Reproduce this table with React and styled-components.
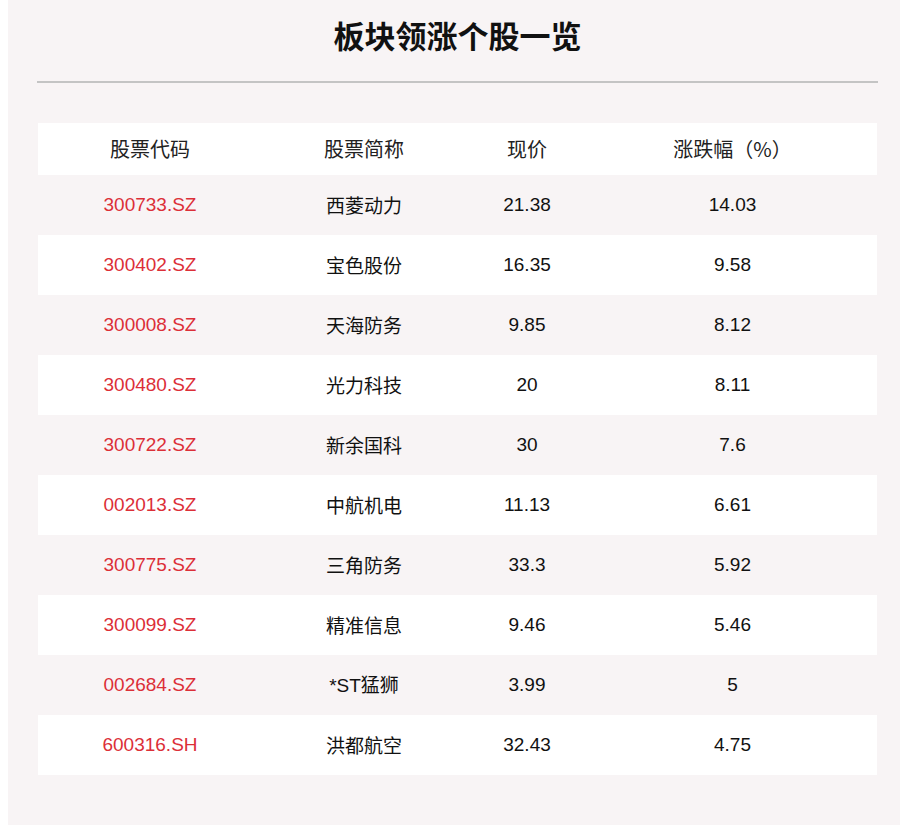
import styled, { createGlobalStyle } from "styled-components";

const GlobalStyle = createGlobalStyle`
  html, body {
    margin:0;
    padding:0;
    background:#ffffff;
  }
  body {
    font-family:"Liberation Sans", Arial, "Noto Sans CJK SC", sans-serif;
  }
`;

const Page = styled.div`
  margin-left:8px;
  height:825px;
  background:#f8f4f5;
  padding:0 23px 0 29px;
  box-sizing:border-box;
  overflow:hidden;
`;

const Title = styled.h1`
  margin:0;
  height:70px;
  line-height:70px;
  text-align:center;
  font-size:31px;
  font-weight:bold;
  color:#111;
  padding-left:1px;
  font-family:"Noto Sans CJK SC", "Liberation Sans", sans-serif;
`;

const Divider = styled.div`
  margin-top:11px;
  height:2px;
  background:#c4c4c4;
  width:841px;
`;

const Table = styled.div`
  margin-top:40px;
  margin-left:1px;
  width:839px;
  display:flex;
  flex-direction:column;
`;

const Row = styled.div`
  display:grid;
  grid-template-columns:224px 204px 122px 289px;
  align-items:center;
  height:${p => (p.$head ? 52 : 60)}px;
  background:${p => (p.$shade ? "#f8f4f5" : "#ffffff")};
`;

const Cell = styled.div`
  text-align:center;
  font-size:${p => (p.$head ? 20 : 19)}px;
  line-height:1.2;
  color:${p => (p.$red ? "#dc2f38" : p.$head ? "#222" : "#111")};
  font-family:${p =>
    p.$cjk
      ? `"Noto Sans CJK SC", "Liberation Sans", sans-serif`
      : `"Liberation Sans", Arial, "Noto Sans CJK SC", sans-serif`};
`;

const Latin = styled.span`
  font-family:"Liberation Sans", Arial, sans-serif;
`;

const rows = [
  ["300733.SZ", "西菱动力", "21.38", "14.03"],
  ["300402.SZ", "宝色股份", "16.35", "9.58"],
  ["300008.SZ", "天海防务", "9.85", "8.12"],
  ["300480.SZ", "光力科技", "20", "8.11"],
  ["300722.SZ", "新余国科", "30", "7.6"],
  ["002013.SZ", "中航机电", "11.13", "6.61"],
  ["300775.SZ", "三角防务", "33.3", "5.92"],
  ["300099.SZ", "精准信息", "9.46", "5.46"],
  ["002684.SZ", "*ST猛狮", "3.99", "5"],
  ["600316.SH", "洪都航空", "32.43", "4.75"],
];

// names like "*ST猛狮" keep their latin prefix in the latin face
const renderName = name => {
  const m = name.match(/^([*A-Za-z]+)(.*)$/);
  if (!m) return name;
  return (
    <>
      <Latin>{m[1]}</Latin>
      {m[2]}
    </>
  );
};

export default function App() {
  return (
    <>
      <GlobalStyle />
      <Page>
        <Title>板块领涨个股一览</Title>
        <Divider />
        <Table>
          <Row $head>
            <Cell $head $cjk>股票代码</Cell>
            <Cell $head $cjk>股票简称</Cell>
            <Cell $head $cjk>现价</Cell>
            <Cell $head $cjk>涨跌幅（%）</Cell>
          </Row>
          {rows.map((r, i) => (
            <Row key={r[0]} $shade={i % 2 === 0}>
              <Cell $red>{r[0]}</Cell>
              <Cell $cjk>{renderName(r[1])}</Cell>
              <Cell>{r[2]}</Cell>
              <Cell>{r[3]}</Cell>
            </Row>
          ))}
        </Table>
      </Page>
    </>
  );
}
